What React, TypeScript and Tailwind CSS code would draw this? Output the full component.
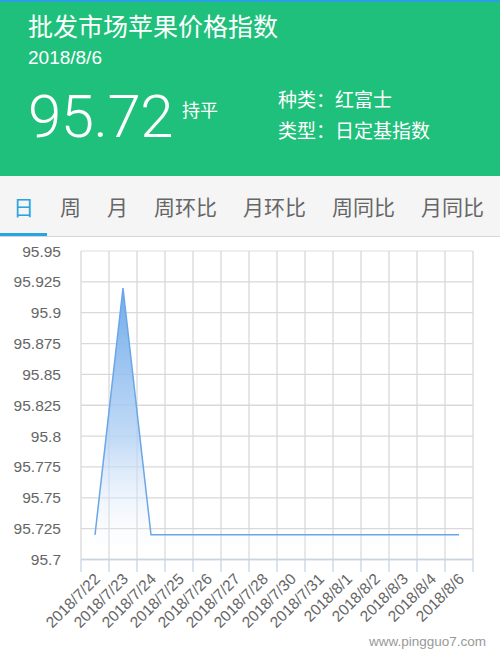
const tabs = ['日', '周', '月', '周环比', '月环比', '周同比', '月同比'];

const dates = [
    '2018/7/22', '2018/7/23', '2018/7/24', '2018/7/25', '2018/7/26', '2018/7/27', '2018/7/28',
    '2018/7/30', '2018/7/31', '2018/8/1', '2018/8/2', '2018/8/3', '2018/8/4', '2018/8/6',
];

const values = [95.72, 95.92, 95.72, 95.72, 95.72, 95.72, 95.72, 95.72, 95.72, 95.72, 95.72, 95.72, 95.72, 95.72];

const yTicks = ['95.95', '95.925', '95.9', '95.875', '95.85', '95.825', '95.8', '95.775', '95.75', '95.725', '95.7'];

const LEFT = 81;
const COL = 28;
const BOTTOM = 559.5;
const STEP = 30.85;

const yOf = (v: number) => BOTTOM - ((v - 95.7) / 0.025) * STEP;
const xOf = (i: number) => LEFT + COL * i + COL / 2;

function PriceChart() {
    const pts = values.map((v, i) => `${xOf(i)},${yOf(v)}`).join(' ');
    const area = `${xOf(0)},${BOTTOM} ${pts} ${xOf(values.length - 1)},${BOTTOM}`;
    const right = LEFT + COL * dates.length;

    return (
        <svg width="500" height="413" viewBox="0 237 500 413" className="block">
            <defs>
                <linearGradient id="fill" x1="0" y1="287" x2="0" y2="565" gradientUnits="userSpaceOnUse">
                    <stop offset="0" stopColor="#6eaaea" stopOpacity="1" />
                    <stop offset="0.55" stopColor="#b4d2f4" stopOpacity="0.8" />
                    <stop offset="1" stopColor="#ffffff" stopOpacity="0" />
                </linearGradient>
            </defs>

            {/* grid */}
            {yTicks.map((t, i) => (
                <line key={t} x1={LEFT} x2={right} y1={251 + STEP * i} y2={251 + STEP * i}
                    stroke={i === 0 ? '#e8e8e8' : '#d9d9d9'} strokeWidth="1.3" />
            ))}
            {dates.map((_, i) => (
                <line key={i} x1={LEFT + COL * i} x2={LEFT + COL * i} y1={251} y2={BOTTOM}
                    stroke="#d9d9d9" strokeWidth="1.3" />
            ))}
            <line x1={right} x2={right} y1={251} y2={BOTTOM} stroke="#d9d9d9" strokeWidth="1.3" />

            {/* area + line */}
            <polygon points={area} fill="url(#fill)" />
            <polyline points={pts} fill="none" stroke="#6ba6e7" strokeWidth="1.5" />

            {/* x axis */}
            <line x1={LEFT} x2={right} y1={BOTTOM} y2={BOTTOM} stroke="#c8d4e6" strokeWidth="1.3" />
            {Array.from({ length: dates.length + 1 }).map((_, i) => (
                <line key={i} x1={LEFT + COL * i} x2={LEFT + COL * i} y1={BOTTOM} y2={572}
                    stroke="#c8d4e6" strokeWidth="1.3" />
            ))}

            {/* y labels */}
            {yTicks.map((t, i) => (
                <text key={t} x={61} y={251 + STEP * i + 5.5} textAnchor="end" fontSize="15.5"
                    fill="#666666" fontFamily="'Liberation Sans', Arial, sans-serif">
                    {t}
                </text>
            ))}

            {/* x labels */}
            {dates.map((d, i) => {
                const x = xOf(i) + 6;
                const y = 580;
                return (
                    <text key={d} x={x} y={y} textAnchor="end" fontSize="15.5" fill="#666666"
                        fontFamily="'Liberation Sans', Arial, sans-serif"
                        transform={`rotate(-45 ${x} ${y})`}>
                        {d}
                    </text>
                );
            })}

            <text x={486} y={646} textAnchor="end" fontSize="13.5" fill="#999999"
                fontFamily="'Liberation Sans', Arial, sans-serif">
                www.pingguo7.com
            </text>
        </svg>
    );
}

export default function App() {
    return (
        <div className="w-[500px] h-[650px] bg-white overflow-hidden" style={{ fontFamily: "'Noto Sans CJK SC', 'Liberation Sans', sans-serif" }}>
            {/* Header */}
            <div className="border-t-2 border-[#2aa0e0] bg-[#1fc07b] h-[176px] pl-[28px] text-white">
                <div className="pt-[6px] text-[25px] leading-[34px]">批发市场苹果价格指数</div>
                <div className="mt-[4px] text-[19px] leading-[24px] font-['Liberation_Sans',sans-serif]">2018/8/6</div>
                <div className="flex mt-[12px]">
                    <div className="flex items-start w-[250px]">
                        <span className="text-[60px] leading-[70px] font-light font-['Roboto',sans-serif] tracking-[-0.5px]">95.72</span>
                        <span className="ml-[9px] mt-[15px] text-[18px] leading-[24px]">持平</span>
                    </div>
                    <div className="text-[19px] leading-[31px] pt-[1px]">
                        <div>种类：红富士</div>
                        <div>类型：日定基指数</div>
                    </div>
                </div>
            </div>

            {/* Tabs */}
            <div className="flex bg-[#f5f5f5] h-[61px] border-b border-[#d6d6d6]">
                {tabs.map((t, i) => (
                    <div key={t} className={`relative px-[13px] flex items-center text-[21px] leading-none ${i === 0 ? 'text-[#28a4e0]' : 'text-[#666666]'}`}>
                        {t}
                        {i === 0 && <div className="absolute left-0 right-0 bottom-0 h-[3px] bg-[#28a4e0]" />}
                    </div>
                ))}
            </div>

            <PriceChart />
        </div>
    );
}
